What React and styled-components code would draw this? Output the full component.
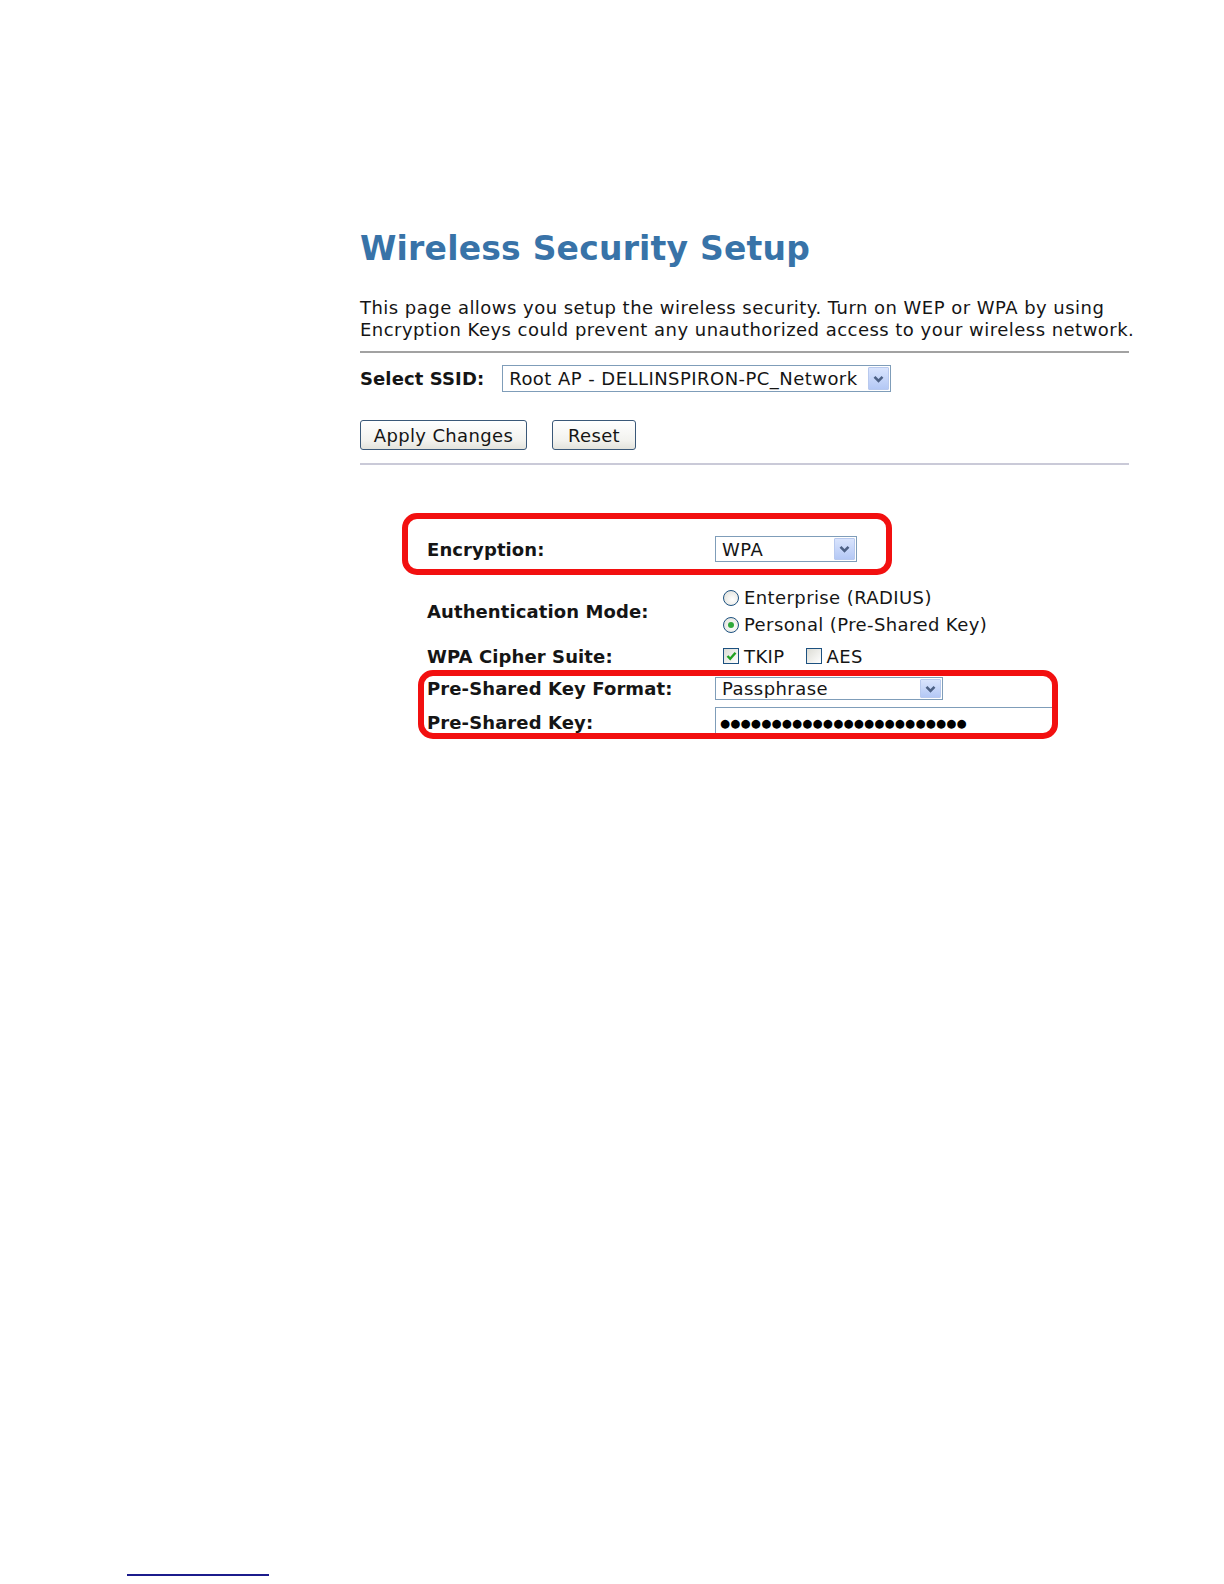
import React from "react";
import styled, { createGlobalStyle } from "styled-components";

const GlobalStyle = createGlobalStyle`
  html, body {
    margin: 0;
    padding: 0;
    background: #ffffff;
  }
  body {
    font-family: "DejaVu Sans", Verdana, sans-serif;
    color: #151515;
  }
`;

const Page = styled.div`
  min-height: 1584px;
  box-sizing: border-box;
  display: flex;
  flex-direction: column;
  padding-top: 229px;
`;

const Content = styled.div`
  margin-left: 360px;
  width: 769px;
`;

const Title = styled.h1`
  margin: 0;
  font-size: 33px;
  line-height: 40px;
  font-weight: bold;
  letter-spacing: 0.2px;
  color: #3873a8;
`;

const Intro = styled.p`
  margin: 28px 0 0;
  font-size: 18px;
  line-height: 22px;
  letter-spacing: 0.47px;
  white-space: nowrap;
`;

const Rule = styled.hr`
  margin: ${(p) => p.$top}px 0 0;
  border: 0;
  height: 2px;
  background: ${(p) => (p.$light ? "#cacad8" : "#a2a2a2")};
`;

const SsidRow = styled.div`
  display: flex;
  align-items: center;
  gap: 18px;
  margin-top: 12px;
`;

const BoldLabel = styled.span`
  font-size: 18px;
  font-weight: bold;
  letter-spacing: 0.1px;
  white-space: nowrap;
`;

const SelectBox = styled.div`
  box-sizing: border-box;
  width: ${(p) => p.$width}px;
  height: ${(p) => p.$height}px;
  display: flex;
  align-items: stretch;
  border: 1px solid #7f9db9;
  background: #fff;
  padding: 1px;
`;

const SelectValue = styled.span`
  flex: 1;
  display: flex;
  align-items: center;
  padding-left: 5px;
  font-size: 18px;
  letter-spacing: 0.45px;
  white-space: nowrap;
  overflow: hidden;
`;

const DropButton = styled.span`
  width: 21px;
  display: flex;
  align-items: center;
  justify-content: center;
  background: linear-gradient(#d9e4fd, #b4c8f5);
  border: 1px solid #b8c9ee;
  border-radius: 1px;
  box-sizing: border-box;
`;

const Chevron = () => (
  <svg width="11" height="8" viewBox="0 0 11 8">
    <path d="M1.5 1.8 L5.5 5.8 L9.5 1.8" fill="none" stroke="#4d6185" strokeWidth="2.6" />
  </svg>
);

const Select = ({ width, height, children }) => (
  <SelectBox $width={width} $height={height}>
    <SelectValue>{children}</SelectValue>
    <DropButton>
      <Chevron />
    </DropButton>
  </SelectBox>
);

const ButtonBar = styled.div`
  display: flex;
  gap: 25px;
  margin-top: 28px;
`;

const Button = styled.button`
  box-sizing: border-box;
  width: ${(p) => p.$width}px;
  height: 30px;
  border: 1px solid #3a5878;
  border-radius: 3px;
  background: linear-gradient(#ffffff, #f2f2ee 70%, #e3e3dc);
  font-family: "DejaVu Sans", Verdana, sans-serif;
  font-size: 18px;
  letter-spacing: 0.35px;
  color: #151515;
  padding: 0;
`;

const Settings = styled.div`
  margin: 48px 0 0 67px;
`;

const Highlight = styled.div`
  box-sizing: content-box;
  margin-top: ${(p) => p.$top || 0}px;
  margin-left: ${(p) => p.$shift}px;
  width: ${(p) => p.$width}px;
  height: ${(p) => p.$height}px;
  border: 6px solid #f21010;
  border-radius: 15px;
  padding: ${(p) => p.$pad};
  overflow: hidden;
`;

const SettingRow = styled.div`
  display: grid;
  grid-template-columns: 288px auto;
  align-items: center;
  margin-top: ${(p) => p.$top || 0}px;
`;

const Options = styled.div`
  display: flex;
  flex-direction: column;
  padding-left: 8px;
`;

const Option = styled.label`
  display: flex;
  align-items: center;
  height: 27px;
  font-size: 18px;
  letter-spacing: 0.4px;
  gap: 5px;
`;

const Radio = styled.span`
  box-sizing: border-box;
  width: 16px;
  height: 16px;
  border-radius: 50%;
  border: 1px solid #1c5180;
  background: radial-gradient(circle at 60% 60%, #ffffff, #dcdcd5);
  display: flex;
  align-items: center;
  justify-content: center;

  &::after {
    content: "";
    width: 6px;
    height: 6px;
    border-radius: 50%;
    background: ${(p) => (p.$checked ? "#2fa83a" : "transparent")};
  }
`;

const Checks = styled.div`
  display: flex;
  align-items: center;
  gap: 21px;
  height: 22px;
  padding-left: 8px;
`;

const Check = styled.label`
  display: flex;
  align-items: center;
  gap: 5px;
  font-size: 18px;
  letter-spacing: 0.4px;
`;

const Box = styled.span`
  box-sizing: border-box;
  width: 16px;
  height: 16px;
  border: 1px solid #1c5180;
  background: linear-gradient(135deg, #dcdcd5, #ffffff);
  display: flex;
  align-items: center;
  justify-content: center;
`;

const Tick = () => (
  <svg width="11" height="10" viewBox="0 0 11 10">
    <path d="M1.5 5 L4.2 7.8 L9.5 1.8" fill="none" stroke="#21a121" strokeWidth="2.4" />
  </svg>
);

const KeyInput = styled.div`
  box-sizing: border-box;
  width: 345px;
  height: 30px;
  border: 1px solid #7f9db9;
  padding: 1px 0 0 4px;
  display: flex;
  align-items: center;
`;

const Dots = styled.span`
  font-size: 11.5px;
  letter-spacing: 0.25px;
  color: #000;
  white-space: nowrap;
`;

const FootRule = styled.div`
  margin: auto 0 8px 127px;
  width: 142px;
  height: 2px;
  background: #1b1b8c;
`;

export default function App() {
  return (
    <Page>
      <GlobalStyle />
      <Content>
        <Title>Wireless Security Setup</Title>
        <Intro>
          This page allows you setup the wireless security. Turn on WEP or WPA by using
          <br />
          Encryption Keys could prevent any unauthorized access to your wireless network.
        </Intro>
        <Rule $top={10} />

        <SsidRow>
          <BoldLabel>Select SSID:</BoldLabel>
          <Select width={389} height={27}>
            Root AP - DELLINSPIRON-PC_Network
          </Select>
        </SsidRow>

        <ButtonBar>
          <Button $width={167}>Apply Changes</Button>
          <Button $width={84}>Reset</Button>
        </ButtonBar>
        <Rule $top={13} $light />

        <Settings>
          <Highlight $shift={-25} $width={430} $height={26} $pad="17px 29px 7px 19px">
            <SettingRow>
              <BoldLabel>Encryption:</BoldLabel>
              <Select width={142} height={26}>
                WPA
              </Select>
            </SettingRow>
          </Highlight>

          <SettingRow $top={9}>
            <BoldLabel>Authentication Mode:</BoldLabel>
            <Options>
              <Option>
                <Radio />
                Enterprise (RADIUS)
              </Option>
              <Option>
                <Radio $checked />
                Personal (Pre-Shared Key)
              </Option>
            </Options>
          </SettingRow>

          <SettingRow $top={7}>
            <BoldLabel>WPA Cipher Suite:</BoldLabel>
            <Checks>
              <Check>
                <Box>
                  <Tick />
                </Box>
                TKIP
              </Check>
              <Check>
                <Box />
                AES
              </Check>
            </Checks>
          </SettingRow>

          <Highlight $top={3} $shift={-9} $width={625} $height={56} $pad="1px 0 0 3px">
            <SettingRow>
              <BoldLabel>Pre-Shared Key Format:</BoldLabel>
              <Select width={228} height={23}>
                Passphrase
              </Select>
            </SettingRow>
            <SettingRow $top={7}>
              <BoldLabel>Pre-Shared Key:</BoldLabel>
              <KeyInput>
                <Dots>{"●".repeat(24)}</Dots>
              </KeyInput>
            </SettingRow>
          </Highlight>
        </Settings>
      </Content>
      <FootRule />
    </Page>
  );
}
